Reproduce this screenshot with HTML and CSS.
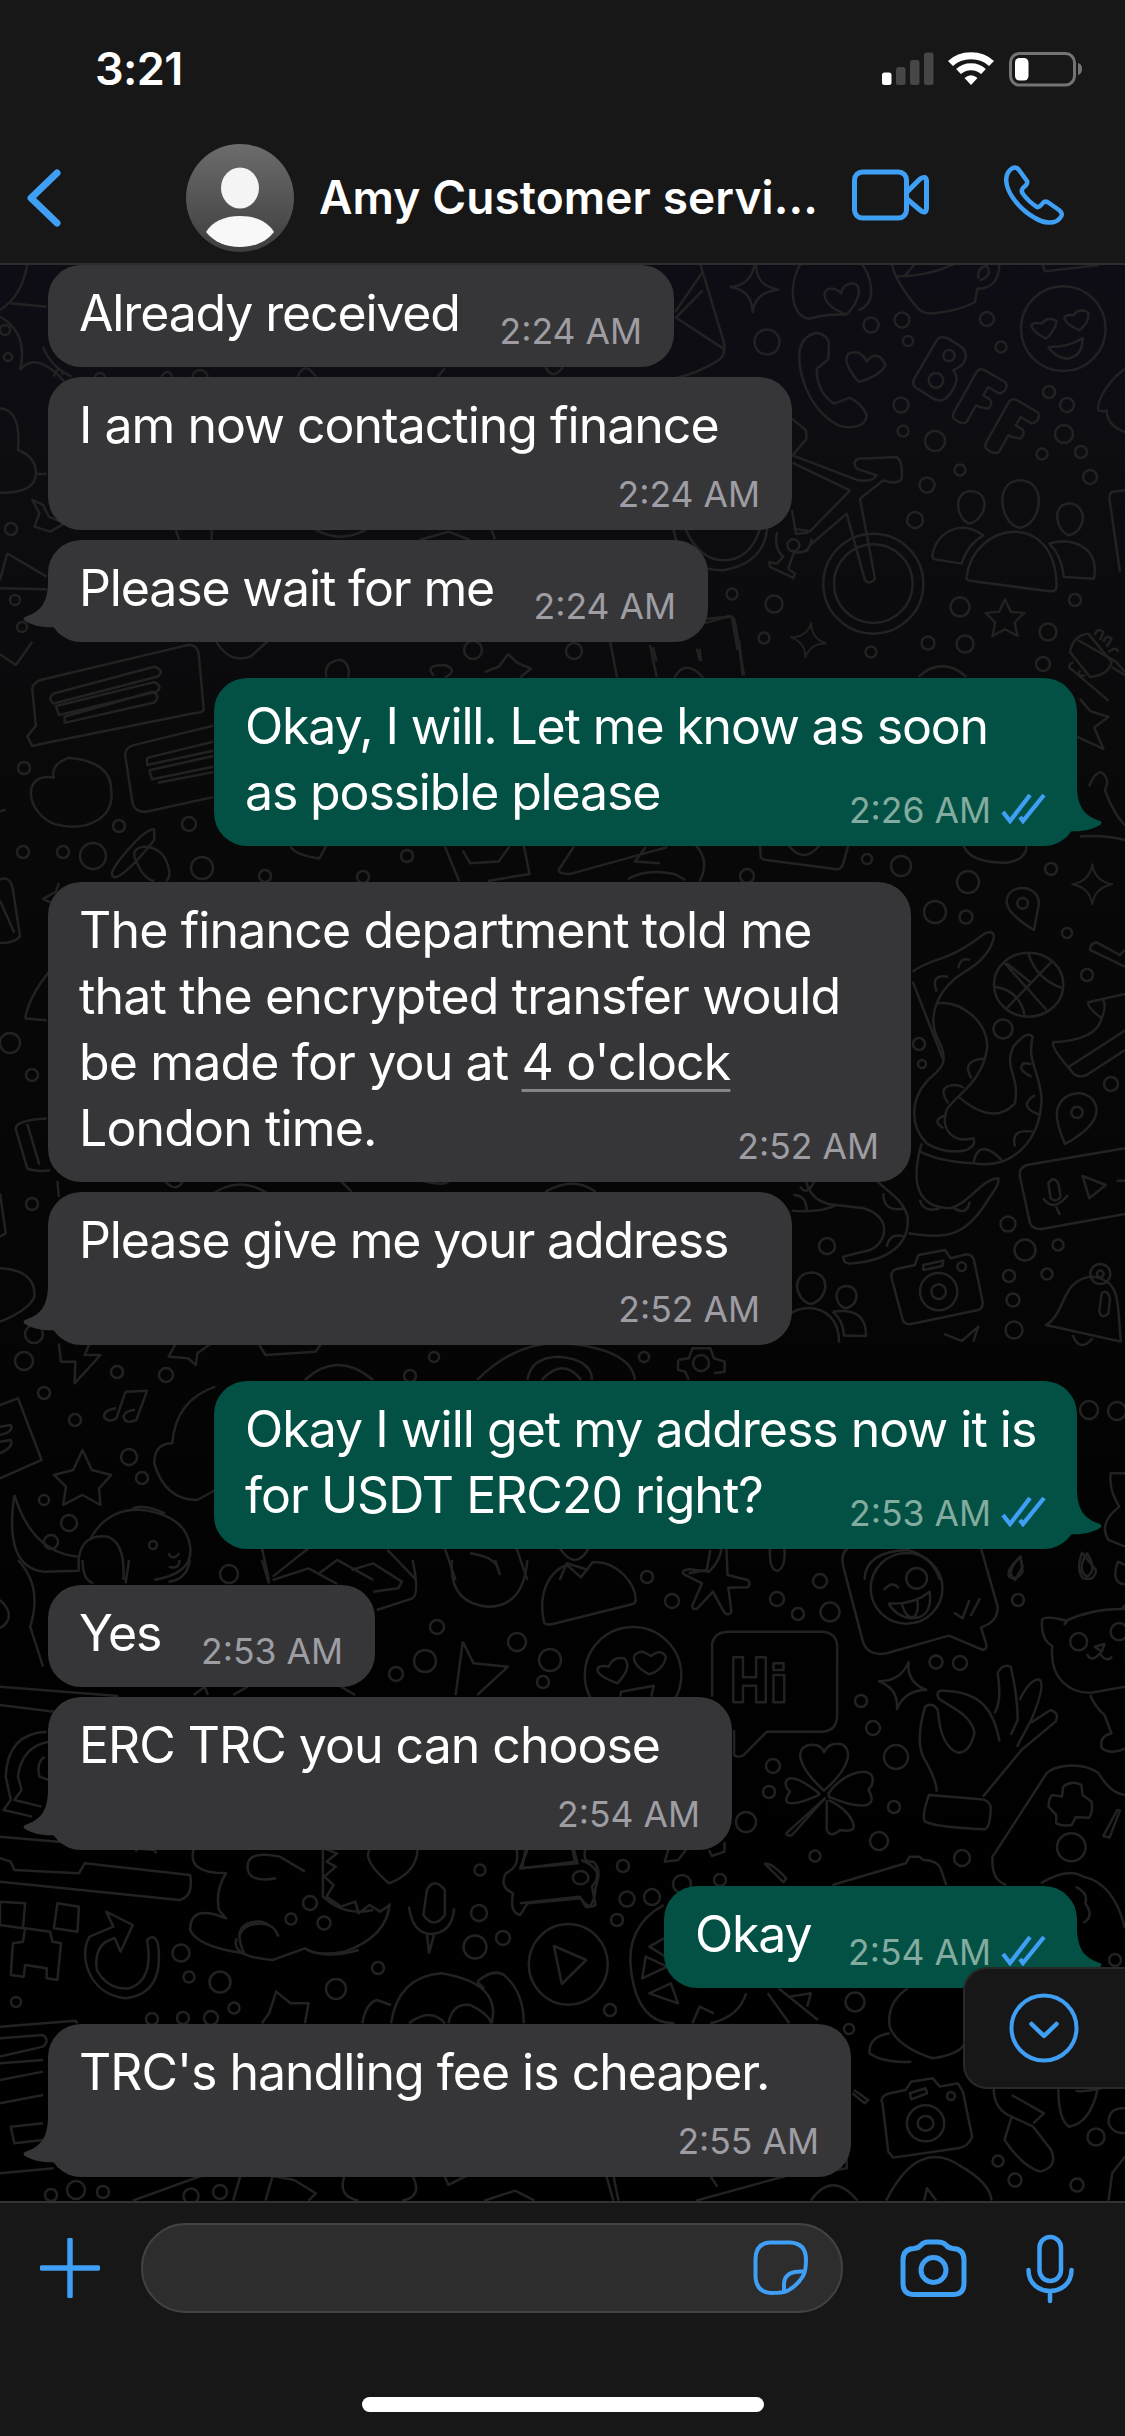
FILE: index.html
```html
<!DOCTYPE html>
<html lang="en">
<head>
<meta charset="utf-8">
<title>Amy Customer service</title>
<link rel="stylesheet" href="styles.css">
</head>
<body>
<svg class="defs" width="0" height="0" aria-hidden="true">
  <defs>
    <symbol id="ticks" viewBox="0 0 46 31"><path d="M2 19 L9 28 L29 2 M19 24 L22 28 L43 2" fill="none" stroke="#3f9ff5" stroke-width="4.300"/></symbol>
    <symbol id="tail" viewBox="0 0 36 60"><path d="M25 0 C25 24 16 31 2 36 Q-1 38 2 40 C11 45 20 47 34 46 L36 0Z"/></symbol>
    <path id="spark" d="M0 -24 Q3 -4 24 0 Q3 4 0 24 Q-3 4 -24 0 Q-3 -4 0 -24Z"/>
    <path id="star" d="M0 -20 L6 -7 L20 -6 L10 4 L13 18 L0 11 L-13 18 L-10 4 L-20 -6 L-6 -7Z"/>
  </defs>
</svg>
<div class="phone">
  <header class="header">
    <div class="status">
      <span class="clock">3:21</span>
      <svg class="status-icons" viewBox="0 0 202 36" width="202" height="36">
        <rect x="0" y="21.500" width="9.500" height="12.500" rx="2.500" fill="#fff"/>
        <g fill="#464646"><rect x="14" y="16" width="9.500" height="18" rx="2.500"/><rect x="28" y="9" width="9.500" height="25" rx="2.500"/><rect x="42" y="1.500" width="9.500" height="32.500" rx="2.500"/></g>
        <g fill="none" stroke="#fff" stroke-width="7"><path d="M68.500 12.500 C79 2 99 2 109.500 12.500"/><path d="M76.500 20.500 C83.500 14 94.500 14 101.500 20.500"/></g>
        <path d="M82.500 27 Q89 21.500 95.500 27 L89 34Z" fill="#fff"/>
        <rect x="128.500" y="2.500" width="64" height="31.500" rx="9" fill="none" stroke="#747474" stroke-width="3"/>
        <rect x="133" y="7" width="13.500" height="22.500" rx="4.500" fill="#fff"/>
        <path d="M196 12 Q200 13 200 18 Q200 23 196 24Z" fill="#747474"/>
      </svg>
    </div>
    <div class="nav">
      <svg class="back" viewBox="0 0 36 60" width="36" height="60"><path d="M31 5 L5 30 L31 55" fill="none" stroke="#3f9ff5" stroke-width="7" stroke-linecap="round" stroke-linejoin="round"/></svg>
      <svg class="avatar" viewBox="0 0 108 108" width="108" height="108">
        <defs><linearGradient id="av" x1="0" y1="0" x2="0" y2="1"><stop offset="0" stop-color="#6c6c6c"/><stop offset="1" stop-color="#3e3e3e"/></linearGradient></defs>
        <circle cx="54" cy="54" r="54" fill="url(#av)"/>
        <ellipse cx="54" cy="44" rx="19" ry="20.500" fill="#f4f4f4"/>
        <path d="M20 88 C26 78 38 72 54 72 S82 78 88 88 C80 98 68 103 54 103 S28 98 20 88Z" fill="#f8f8f8"/>
      </svg>
      <span class="name">Amy Customer servi...</span>
      <svg class="video" viewBox="0 0 78 52" width="78" height="52" fill="none" stroke="#3f9ff5" stroke-width="5" stroke-linejoin="round"><rect x="3.500" y="3" width="52" height="46" rx="8"/><path d="M56 23 L69 10 Q75 6 75.500 12 V39 Q75 46 69 41 L56 30"/></svg>
      <svg class="call" viewBox="0 0 60 60" width="60" height="60" fill="none" stroke="#3f9ff5" stroke-width="4.500" stroke-linejoin="round"><path d="M6 5 Q11 0 15 5 L23 16 Q24 19 20 22 Q16 25 19 29 Q25 37 33 42 Q35 43 38 39 Q41 35 45 38 L55 45 Q60 49 56 53 C51 60 39 58 31 53 Q18 46 9 33 C0 20 1 10 6 5Z"/></svg>
    </div>
  </header>

  <main class="chat">
    <svg class="wallpaper" viewBox="0 265 1125 1936" width="1125" height="1936" aria-hidden="true">
      <g transform="matrix(.3333 0 0 .3333 640 262)">
        <path d="M180 0 L188 30 L250 235 Q262 280 230 298 Q170 335 100 350 M188 30 L105 150 M105 165 L250 260 M188 85 L110 165"/>
        <path d="M348 0 Q345 72 415 83 Q345 90 338 150 Q335 85 272 75 Q335 70 345 0"/>
        <path d="M485 0 C440 70 455 170 510 170 Q560 155 620 158 M655 145 C720 120 690 30 660 0 M620 157 C540 130 540 75 580 80 Q598 85 603 95 Q610 60 645 65 C670 80 650 130 620 157Z"/>
        <path d="M755 0 Q760 50 830 135 Q850 160 890 153 Q960 145 1005 120 L1012 80 Q1080 80 1078 0 M765 43 Q860 45 945 5 M795 40 L830 0 M1015 50 Q1012 15 1040 12 Q1060 40 1020 55 M1205 0 L1215 28 L1375 10"/>
        <circle cx="1270" cy="200" r="127"/><path d="M1218 230 C1160 200 1165 175 1205 185 Q1225 160 1250 178 C1245 205 1230 220 1218 230Z M1318 205 C1265 180 1260 155 1300 160 Q1320 135 1345 152 C1348 180 1330 195 1318 205Z M1225 255 Q1290 255 1328 228 Q1328 285 1280 290 Q1245 285 1225 255Z"/>
        <path d="M530 212 Q565 220 567 245 L565 292 L530 320 Q530 390 582 425 L630 407 Q670 430 680 460 C680 490 640 505 595 490 C500 440 470 320 480 260 Q490 220 530 212Z"/>
        <path d="M656 360 Q605 300 625 275 Q660 260 680 298 Q715 260 737 310 Q715 345 656 360Z"/>
        <path d="M890 235 Q900 220 925 230 L965 255 Q990 280 965 310 L940 325 Q960 350 940 380 Q915 430 880 410 L825 375 Q815 365 823 350Z"/><circle cx="927" cy="281" r="17"/><circle cx="888" cy="355" r="22"/>
        <path id="f" d="M1010 330 Q1020 315 1040 328 L1095 360 Q1105 370 1095 385 Q1080 400 1070 390 L1045 375 L1030 400 L1050 412 Q1060 425 1045 440 L1020 435 L1008 430 L980 480 Q965 490 942 470 Q935 460 945 445Z"/>
        <use href="#f" x="97" y="90"/>
        <path d="M456 470 L498 505 L500 530 L458 580 L655 655 Q700 660 710 640 L650 620 Q635 600 655 590 L770 585 Q790 600 785 650 Q770 670 730 655 L660 710 L705 950 Q690 970 675 955 L620 755 L510 850 L500 870 M458 603 L630 685 L510 808 L460 800 M456 745 L468 815 L505 812"/>
        <circle cx="700" cy="965" r="150"/><circle cx="700" cy="965" r="118"/>
        <path d="M100 800 Q120 925 250 925 Q370 905 382 800 M135 800 Q180 895 250 895 Q330 895 360 800 M412 810 Q400 860 430 885 L410 905 L388 900 L390 915 L460 948 L465 935 L445 920 L462 870 Q510 880 515 830"/><circle cx="460" cy="850" r="18"/>
        <path d="M1140 655 C1060 655 1080 790 1140 797 C1205 790 1225 655 1140 655Z M992 687 C935 690 950 775 990 785 C1040 770 1055 690 992 687Z M1288 724 C1230 728 1250 810 1288 820 C1340 805 1345 730 1288 724Z M1030 820 C960 770 890 810 877 880 Q877 892 890 893 L965 905 Q980 850 1030 820Z M980 945 C1000 780 1245 740 1250 970 Q1250 990 1230 988 L1000 958 Q975 955 980 945Z M1228 845 C1290 825 1380 850 1362 950 L1272 945 Q1265 880 1228 845Z"/>
        <use href="#star" transform="translate(1095 1070) scale(2.900)"/><use href="#spark" transform="translate(505 1135) rotate(10) scale(2.200)"/>
        <path d="M1290 1170 Q1300 1120 1345 1115 L1415 1200 Q1405 1240 1350 1245Z M1365 1120 Q1370 1095 1390 1110 L1380 1135 M1390 1140 Q1400 1115 1415 1130 L1400 1155 M1405 1170 Q1430 1150 1435 1170 M1300 1200 Q1275 1215 1300 1225 M1320 1225 Q1310 1245 1335 1240 M1415 1215 L1455 1240 M1455 685 L1415 690 Q1405 700 1410 720 L1440 930 M1455 320 C1400 360 1370 420 1375 445 Q1390 450 1400 445 Q1400 490 1455 510"/>
        <path d="M190 1085 L265 1063 Q280 1060 285 1080 L312 1240 M30 1150 L50 1245 M170 1160 L180 1195 M835 1245 Q905 1180 980 1245"/>
      </g>
      <g transform="matrix(.3333 0 0 .3333 740 840)">
        <path d="M60 15 L62 50 Q65 60 80 60 L290 88 Q305 88 310 70 L325 15 M145 15 Q190 75 240 15 M670 15 Q690 70 800 68 Q860 60 860 15"/>
        <use href="#spark" transform="translate(1057 133) scale(2.500)"/>
        <path d="M882 270 Q800 220 800 185 C800 130 895 130 897 190Z"/><circle cx="848" cy="190" r="16"/>
        <path d="M975 912 Q940 830 955 800 C980 740 1065 750 1070 810 Q1070 860 975 912Z"/><circle cx="1011" cy="817" r="17"/>
        <ellipse cx="866" cy="434" rx="104" ry="96"/><path d="M790 365 L920 510 M800 505 L935 365 M865 340 Q890 420 970 445 M765 440 Q840 450 855 530 M800 370 L875 430"/>
        <path d="M518 395 C580 350 620 370 735 280 Q760 270 762 290 Q750 350 675 395 C600 440 560 520 590 590 C640 680 590 690 560 725 C510 780 510 860 560 910 Q620 945 680 930 Q710 915 700 895 C640 910 600 870 620 810 C640 770 730 730 742 620 C740 540 660 480 590 490 M518 425 L610 660 M655 770 Q760 860 825 790 C840 700 790 690 820 620 Q860 570 878 590 C860 670 900 690 905 780 C900 900 820 990 700 970 Q600 965 540 935"/>
        <path d="M655 385 Q660 350 690 360 M590 455 Q570 400 625 410 M695 715 Q660 660 738 655 M625 790 Q590 740 640 735 Q665 735 670 745 M610 865 Q570 840 620 825 M875 710 Q830 690 850 670 L875 672 M900 825 Q830 800 885 765 M825 920 Q810 865 880 875 M700 970 Q715 890 785 960"/>
        <path d="M545 910 Q490 1100 630 1105 C690 1090 720 1020 775 1015 Q780 1030 750 1070 C680 1190 620 1200 505 1180 M192 955 Q185 1090 290 1095 L370 1105 C460 1130 440 1210 390 1230 L310 1250 Q310 1275 340 1270 C450 1260 510 1210 503 1130 C480 1050 400 1050 370 955 M540 1080 Q550 1120 600 1105 M640 1103 Q680 1130 690 1085 M430 1060 Q430 1120 495 1105 M340 960 Q345 1020 385 1018 M135 1018 L195 1010 M155 1112 Q240 1120 290 1095 M160 1065 Q200 1065 200 1112 M440 1220 Q450 1175 495 1190"/>
        <path d="M455 1315 Q450 1295 470 1287 L525 1275 L535 1245 L615 1230 L632 1255 L680 1243 Q700 1245 703 1265 L728 1385 Q730 1405 715 1410 L510 1453 Q490 1453 487 1435Z M550 1275 L610 1262 L607 1278 L550 1290Z M540 1355 a56 56 0 1 0 112 0 a56 56 0 1 0 -112 0 M574 1355 a22 22 0 1 0 44 0 a22 22 0 1 0 -44 0 M652 1280 a13 13 0 1 0 26 0 a13 13 0 1 0 -26 0"/>
        <path d="M918 1455 C980 1420 960 1320 1055 1310 C1150 1320 1130 1400 1143 1505Z M998 1485 Q1020 1540 1058 1495 M1085 1360 Q1105 1345 1110 1380 L1105 1420 Q1085 1440 1078 1415Z"/><circle cx="1081" cy="1302" r="30"/><circle cx="1081" cy="1302" r="10"/>
        <path d="M1155 925 L860 975 Q835 985 840 1010 L870 1150 Q880 1170 905 1167 L1155 1122 M925 1030 Q940 1005 955 1030 L962 1070 Q950 1090 932 1075Z M910 1075 Q940 1120 984 1065 M948 1100 L960 1125 M1028 1008 L1097 1035 L1048 1075Z M1130 1022 H1155"/>
        <path d="M1155 380 L1050 330 Q1050 310 1070 307 L1140 345 L1155 330 M1155 462 L1045 487 Q1040 500 1085 535 Q1070 600 940 607 Q930 620 1000 700 Q1015 715 1040 705 L1155 630 M985 682 L1155 572 M1085 535 Q1100 500 1090 480"/>
        <path d="M215 1298 C150 1300 165 1380 212 1392 C265 1380 275 1300 215 1298Z M320 1338 C275 1340 285 1400 318 1405 C360 1395 360 1340 320 1338Z M105 1503 C120 1370 300 1370 297 1508 M28 1465 Q40 1405 90 1402 L135 1408 Q95 1430 90 1470 M278 1415 Q380 1400 378 1488 L312 1487 Q310 1440 278 1415 M612 1482 L665 1503 L715 1460 L700 1505"/>
      </g>
      <g transform="matrix(.3858 0 0 .3333 520 1540)">
        <path d="M62 245 C40 120 110 70 125 78 L158 112 L188 67 C250 60 300 130 300 180 Q300 190 290 193 L85 252 Q65 257 62 245Z M100 20 Q145 100 180 20"/>
        <path d="M535 25 L538 105 L590 120 Q600 130 590 142 L540 143 L548 215 Q540 232 528 215 L500 155 L460 205 Q445 212 447 195 L472 130 L425 103 Q415 90 440 88 L490 95 Q520 60 522 25 M648 25 Q645 90 668 93 Q690 80 685 25"/>
        <path d="M850 25 Q830 40 838 80 L890 310 Q905 350 950 340 L1112 287 L1200 330 Q1215 325 1205 300 L1195 262 Q1240 245 1238 200 L1195 25"/><ellipse cx="1002" cy="145" rx="93" ry="106"/><ellipse cx="1028" cy="115" rx="27" ry="31"/>
        <path d="M943 150 Q965 120 982 145 M955 190 Q1020 195 1062 155 Q1070 235 1015 235 Q975 230 955 190 M990 192 Q1000 235 1020 232 Q1035 220 1030 175 M1125 218 L1147 235 L1165 180 M1168 228 L1192 175"/>
        <ellipse cx="293" cy="405" rx="125" ry="144"/><path d="M252 430 C180 400 195 370 230 380 Q240 350 270 355 C290 375 270 410 252 430Z M335 403 C280 370 290 335 318 335 L340 348 Q365 325 378 350 C375 380 350 400 335 403Z M260 470 L262 455 L347 437 L340 470"/>
        <path d="M498 470 V310 Q505 275 540 275 H785 Q820 280 822 315 V530 Q820 572 785 575 H640 L580 645 Q565 655 555 645 V570 M553 352 H578 V412 H612 V352 H637 V487 H612 V437 H578 V487 H553Z M657 370 H683 V390 H657Z M657 405 H685 V487 H657Z"/>
        <use href="#spark" transform="translate(992 437) rotate(12) scale(2.600 3)"/>
        <path d="M788 752 C720 680 710 625 750 615 Q780 610 788 637 Q800 605 835 613 C870 640 840 700 788 752Z M775 760 C700 690 680 715 692 745 L700 755 C670 800 710 800 775 765Z M800 760 C840 690 930 670 912 735 L903 750 C930 800 890 815 800 770Z M790 775 L690 880 Q690 890 705 885Z M795 780 V870 Q805 895 830 870 Q875 880 862 845 Q850 810 800 780"/>
        <path d="M1080 755 Q1080 720 1045 650 Q1025 600 1050 500 Q1070 485 1083 510 Q1090 620 1135 638 Q1165 640 1178 580 C1170 520 1110 500 1085 475 Q1075 450 1100 452 C1200 455 1230 520 1243 605 M1230 520 Q1250 480 1238 400 Q1250 370 1272 380 Q1290 470 1290 540 L1272 585 M1295 480 Q1320 420 1345 418 Q1365 430 1325 540 L1288 620 M1325 548 L1375 510 Q1400 520 1388 545 L1300 630 L1200 770 M1060 765 Q1040 830 1050 845 Q1080 862 1205 868 Q1220 860 1220 800 Q1215 780 1195 778Z"/>
        <path d="M1410 255 L1418 243 Q1360 225 1353 240 Q1350 300 1380 318 C1370 420 1430 460 1480 458 L1568 440 M1410 245 Q1480 205 1568 207 M1568 195 L1560 207 M1478 465 Q1490 500 1515 525 L1533 580 Q1500 590 1508 625 Q1530 645 1568 625 M1470 342 Q1480 370 1503 340 Q1520 370 1535 350 M1490 320 L1515 312 L1508 335Z"/><ellipse cx="1448" cy="305" rx="22" ry="26"/><ellipse cx="1553" cy="275" rx="22" ry="26"/>
        <path d="M1568 765 Q1530 760 1500 700 C1450 660 1380 680 1365 700 L1225 950 Q1220 1020 1260 1035 M1350 1030 Q1420 980 1460 1010 Q1540 1030 1568 1165 M1408 740 Q1430 720 1455 735 L1458 765 L1482 785 Q1485 820 1475 833 L1440 832 L1430 855 Q1405 860 1390 850 V825 L1370 800 Q1370 775 1380 765 L1405 770Z M1548 810 L1555 812 L1528 893 L1512 888Z M1440 1040 Q1475 1060 1465 1090 Q1490 1130 1460 1148"/><ellipse cx="1429" cy="922" rx="37" ry="42"/>
        <path d="M1297 50 Q1255 95 1270 112 Q1290 120 1303 95Z M1457 38 Q1440 90 1460 115 Q1490 125 1493 90Z M1568 75 L1550 65 Q1530 130 1568 133 M810 1035 L1000 970 L1010 950 L1035 950 L1045 960 Q1080 960 1090 985 L1105 1035 M635 972 Q650 965 690 1015 L683 1027Z"/>
        <path d="M15 925 L5 985 L143 965 L135 925 M170 925 Q160 970 190 965 C220 1000 190 1040 195 1060 Q185 1110 170 1100 L155 1070 L0 1090 M385 927 L375 965 L410 960 L430 930 M490 930 L497 948 L530 935 V905"/><circle cx="157" cy="1013" r="20"/>
      </g>
      <g transform="matrix(.7175 0 0 .3333 0 250)">
        <path d="M38 45 Q30 140 0 180 M15 160 L65 170 M0 200 Q40 250 28 360 M28 360 Q50 300 90 395 M60 290 Q70 350 100 380 M0 475 Q30 480 25 600 Q50 620 50 670 Q50 730 0 728 M50 672 H65 M45 750 L60 765 L68 800 L90 820 L70 845 L48 830 L55 790Z M0 1015 L65 1018 M10 910 L65 980 M10 910 L0 990 M75 380 Q82 340 88 375 M225 380 Q235 350 240 380 M415 380 Q425 330 440 380 M610 380 L620 355 M760 350 Q770 395 785 350 M245 840 L250 870 M295 840 V870 M440 840 Q475 880 510 840 M585 870 L625 845 L655 870 M685 840 L690 868 M960 1110 L1020 1100 L1028 1200"/>
      </g>
      <g transform="matrix(.7175 0 0 .3571 0 640)">
        <path d="M45 140 Q45 115 65 108 L260 15 Q275 10 277 40 L284 195 Q282 205 270 205 L60 290 L45 297 L38 270 L50 240Z M75 150 L215 75 Q230 85 220 102 L75 178 Q65 165 75 150Z M78 185 L215 118 Q228 130 218 145 L82 210Z M90 215 L212 145 Q225 155 215 175 L90 232Z"/>
        <path d="M297 240 L185 295 Q172 305 175 330 L185 460 Q190 485 205 480 L297 440 M205 330 L297 285 M205 330 V350 L297 310 M208 365 L297 325 M208 365 L212 390 L297 355 M220 400 L297 370"/>
        <path d="M75 385 C30 370 35 480 75 515 C120 540 160 500 155 420 Q155 340 95 330 Q70 350 75 385Z M0 40 L22 70 L45 5 M300 0 Q320 70 350 45 L375 0 M455 105 Q450 60 475 55 Q490 70 485 105 M605 100 Q590 70 620 70 Q640 85 620 105 M675 90 L695 75 L708 40 L722 65 L740 80 L725 105 M850 0 L860 105 M910 20 L915 60 M975 25 L977 60 M1030 0 L1035 100 M940 105 Q955 50 980 105"/>
        <path d="M215 530 Q200 530 165 620 Q150 660 160 665 Q175 660 215 560Z M190 620 C175 570 220 560 232 620 Q240 660 232 675 M190 620 Q200 670 215 675 M0 480 L8 475 M405 578 Q410 600 445 612 L455 575 M620 578 L640 675 M730 575 L738 655 L680 675 M645 590 L655 625 L695 620 L710 578 M800 578 L780 640 Q775 655 795 655 L930 580 M900 580 L885 620 L920 625 M970 575 Q990 620 975 675 M875 670 Q900 640 940 655 L955 672"/>
        <path d="M0 670 Q15 660 18 700 L28 830 Q20 850 0 848 M0 730 L20 820 M82 680 L78 705 L60 725 L70 735 M35 1060 L65 1065 M68 930 Q40 1000 35 1060 M65 1340 Q20 1345 22 1370 L38 1480 Q50 1490 70 1485 M38 1355 L55 1470 M80 1515 L82 1560 M230 1515 Q245 1550 255 1515 M290 1560 Q335 1490 380 1560 M475 1515 L490 1545 M590 1515 Q620 1530 625 1515 M760 1545 Q800 1500 830 1545 M1115 1530 Q1125 1560 1135 1515"/>
        <path d="M1495 85 Q1510 110 1545 170 M1505 165 L1520 200 L1545 215 L1525 245 L1538 305 L1500 270 M1502 0 L1555 60 L1568 90 M1505 550 Q1540 545 1568 560 M1518 410 Q1525 370 1535 370 Q1548 390 1540 420 Q1550 480 1568 520"/>
      </g>
      <g transform="matrix(.7175 0 0 .3333 0 1180)">
        <path d="M0 40 L8 160 L0 170 M0 265 Q50 270 48 350 Q40 390 0 425 M82 490 L85 545 H105 L104 610 L140 525 H118 L125 490 M245 490 L235 530 L262 535 L273 555 L275 520 L295 490 M360 490 L370 525 L440 515 L448 490 M425 600 Q470 510 520 600 M665 600 Q720 480 790 490 Q880 510 885 600 M735 600 Q740 530 780 530 Q825 540 825 600 M755 600 Q785 530 810 600 M945 540 L960 535 L965 505 L990 505 L995 535 L1010 545 V575 L995 580 M945 540 V570 L955 575 L960 600 M300 620 Q245 660 240 790 Q215 790 215 850 Q230 960 275 960 L300 930 M175 635 L205 632 L190 720 Q175 735 172 710 Q175 690 188 690 M175 635 L162 715 Q150 730 145 710 Q145 690 162 685"/>
        <path d="M115 810 L128 870 L155 885 L138 925 L140 975 L115 945 L88 975 L92 920 L75 885 L102 870Z M0 675 L25 655 L58 840 L0 895 M0 740 L15 735 Q20 755 0 765 M0 785 L15 780 Q20 800 0 820 M20 945 Q5 1160 60 1175 L110 1172 M20 945 Q45 1120 110 1130 M110 1175 Q105 1060 150 1070 Q175 1090 172 1200 M125 1080 Q150 980 200 990 Q260 1010 265 1100 Q270 1180 215 1200 M185 985 Q200 970 230 1000 M235 1120 Q240 1145 250 1120 M235 1160 Q250 1170 250 1140"/>
        <path d="M365 1105 L375 1200 M380 1190 L430 1105 M445 1180 L470 1140 L520 1200 M540 1110 L580 1200 M620 1105 L635 1200 M655 1120 Q690 1130 695 1170 M720 1105 L735 1200 M780 1200 L790 1150 L820 1170 M990 1110 L985 1170 L960 1180 M1205 1200 Q1205 1115 1265 1110 Q1300 1130 1310 1200 M1422 1130 Q1400 1180 1415 1200 L1425 1160Z M1515 1120 Q1500 1170 1515 1190 Q1530 1170 1515 1120Z M1568 880 L1548 880 Q1545 930 1560 980 Q1530 1030 1545 1080 L1568 1100"/>
      </g>
      <g transform="matrix(.7175 0 0 .3333 0 1560)">
        <path d="M25 0 Q60 80 42 200 L60 320 M115 0 Q115 60 130 70 M180 0 L175 70 M265 0 Q260 60 235 65 M0 120 Q25 170 0 205 M365 0 L375 70 M380 60 L430 25 L470 72 M490 30 L520 10 L560 65 L555 85 L520 95 M525 150 L575 115 Q585 100 575 0 M630 0 Q625 130 680 140 Q730 140 735 0 M690 0 L697 45 M645 245 L635 405 M645 245 L660 310 L708 320 L665 405 M270 405 L285 380 L290 405 M325 405 L345 380 M475 380 L495 405 M0 380 L165 408 M0 435 L75 455"/>
        <path d="M65 515 Q10 520 8 650 L15 720 L5 750 L45 770 M68 545 Q30 560 25 650 L30 690 L20 720 L58 740 M62 590 Q50 610 55 650 L68 660 M80 820 L90 825 M0 830 L215 870 L218 880 M0 895 L15 905 L20 930 L110 940 L118 910 L265 945 Q270 1010 250 1020 L0 965 M190 875 V865"/>
        <path d="M270 868 Q260 940 315 940 Q300 990 305 1050 L315 1075 Q265 1030 265 1110 Q275 1160 340 1180 Q320 1080 365 1085 Q385 1100 388 1130 M425 935 L390 890 Q345 870 345 920 Q345 970 385 955 M455 868 L470 880 L455 905 L468 920 L452 950 L465 975 L455 1010 L475 1040 L495 1025 L500 1060 L515 1035 L530 1055 L543 1035 M450 870 V1010 Q480 1070 520 1050 M543 1030 Q540 1130 480 1175 Q440 1190 425 1165 M515 870 Q505 900 542 970 Q580 940 582 870 M735 870 L725 925 L805 910 L800 870 M720 870 Q725 920 705 940 Q695 980 715 1000 Q710 1060 725 1065 L735 1030 L810 1015 Q820 1050 830 1035 L825 980 Q845 930 810 900"/>
        <path d="M595 990 Q605 950 620 990 V1065 Q605 1110 590 1065Z M570 1040 Q575 1120 600 1122 Q630 1120 633 1045 M595 1125 L598 1178 L605 1125"/>
      </g>
      <g transform="matrix(.7175 0 0 .3333 0 1860)">
        <path d="M0 125 L35 130 L32 205 L0 195Z M80 130 L110 140 L108 215 L75 205Z M35 205 L70 215 L73 245 L85 250 L80 360 L65 355 V325 L35 315 L33 350 L15 345 L18 250 L32 245Z"/>
        <path d="M148 155 L185 195 L168 275 L160 235 Q130 250 135 330 Q150 390 180 385 Q215 360 205 240 Q215 220 220 250 Q230 400 175 415 C120 400 110 280 125 230 L158 200Z M330 235 Q320 290 380 300 L425 265 Q450 300 500 270 M333 230 Q340 180 375 195"/>
        <ellipse cx="792" cy="313" rx="55" ry="121"/><path d="M772 258 L817 300 L783 372Z M925 135 Q870 200 880 340 Q890 490 940 490 M895 355 L930 320 L900 290 Z M905 260 L935 300 L930 230Z M905 400 L935 370 L945 430Z M1040 400 Q1030 470 990 490 M965 490 L975 440 L995 460"/>
        <path d="M545 490 Q555 350 615 340 Q700 370 685 490 M570 490 Q600 440 620 490 M625 490 Q630 430 655 435 Q680 460 685 490 M665 365 Q690 320 705 350 Q730 400 730 490 M665 365 L675 385 M505 490 Q510 430 525 420 L545 435 M365 490 L375 460 L385 395 L405 430 L430 430 L425 490 M0 500 L105 482 L108 490 M0 535 L60 525 Q70 540 60 560 L0 590 M0 610 L60 600 M60 635 L0 660 M0 730 L60 705 M60 790 L15 800 L20 850 L60 840 M0 940 L75 925"/>
        <path d="M1085 385 L1140 480 M1070 400 L1100 490 M1100 410 L1130 400 L1125 440 M1265 385 Q1235 430 1240 500 Q1250 560 1300 595 Q1345 580 1345 540 M1240 520 Q1210 530 1212 580 Q1230 610 1270 605 M1190 690 L1210 720 L1205 730 L1188 700 M1230 730 Q1225 710 1240 700 L1262 690 L1270 665 L1300 655 L1310 680 L1335 670 L1342 695 L1355 830 Q1350 860 1335 865 L1245 893 L1238 875Z M1268 700 L1290 685 L1292 700 L1270 718Z"/><ellipse cx="1290" cy="790" rx="26" ry="54"/><ellipse cx="1290" cy="790" rx="11" ry="22"/>
        <path d="M1385 685 Q1385 750 1410 770 L1400 840 Q1425 920 1450 935 Q1475 920 1465 870 L1440 800 L1410 770 M1410 705 L1455 760 L1440 790 M1475 685 Q1475 780 1490 800 Q1520 790 1530 685 M1500 690 Q1500 700 1535 685 M1568 745 Q1545 740 1545 790 Q1550 820 1568 820"/>
        <path d="M185 1022 L280 948 M325 1022 L335 948 M370 1022 L380 948 L410 960 L440 1000 L430 1022 M480 948 Q470 1010 500 1022 M575 948 Q590 1010 560 1022 M620 950 L625 975 L650 948 M675 1022 L718 992 L745 1022 M845 948 L855 1022 M855 948 L862 1022 M970 1022 L1095 948 M990 948 L1000 980 M1130 1022 Q1160 930 1195 1022 M1235 1022 Q1280 830 1340 920 Q1380 970 1382 1022 M1288 1022 L1292 985 L1305 1022 M1545 1022 L1550 940 L1568 890 M1165 930 L1180 925 V895"/>
      </g>
      <g>
        <circle cx="767" cy="342" r="12.500"/><circle cx="871" cy="325" r="7.500"/><circle cx="902" cy="320" r="7.500"/><circle cx="908" cy="341" r="5"/><circle cx="987" cy="319" r="7"/><circle cx="1001" cy="347" r="5.500"/><circle cx="901" cy="405" r="7.500"/><circle cx="903" cy="431" r="5.500"/><circle cx="935" cy="441" r="10"/><circle cx="1049" cy="392" r="6"/><circle cx="1067" cy="405" r="7"/><circle cx="1064" cy="434" r="9"/><circle cx="1042" cy="454" r="5.500"/><circle cx="1081" cy="452" r="6"/><circle cx="960" cy="470" r="5.500"/><circle cx="927" cy="485" r="7.500"/><circle cx="915" cy="520" r="8"/><circle cx="1090" cy="477" r="7"/><circle cx="732" cy="594" r="5.500"/><circle cx="774" cy="604" r="8.500"/><circle cx="764" cy="638" r="5.500"/><circle cx="871" cy="652" r="5.500"/><circle cx="928" cy="643" r="6.500"/><circle cx="965" cy="644" r="8.500"/><circle cx="960" cy="607" r="9.500"/><circle cx="1075" cy="600" r="6"/><circle cx="1048" cy="632" r="8.500"/><circle cx="1043" cy="664" r="7"/>
        <circle cx="867" cy="859" r="5"/><circle cx="901" cy="866" r="10"/><circle cx="968" cy="882" r="11"/><circle cx="1051" cy="869" r="6"/><circle cx="935" cy="912" r="11"/><circle cx="966" cy="917" r="6.500"/><circle cx="1067" cy="933" r="5"/><circle cx="1087" cy="975" r="6"/><circle cx="1003" cy="1029" r="9.500"/><circle cx="919" cy="1044" r="6"/><circle cx="922" cy="1064" r="4"/><circle cx="1111" cy="1084" r="7"/><circle cx="1008" cy="1224" r="7.500"/><circle cx="1025" cy="1250" r="10.500"/><circle cx="1058" cy="1245" r="5.500"/><circle cx="827" cy="1246" r="8"/><circle cx="1009" cy="1276" r="6"/><circle cx="1047" cy="1274" r="5.500"/><circle cx="1013" cy="1300" r="6.500"/><circle cx="1014" cy="1330" r="8.500"/><circle cx="1089" cy="1410" r="9"/><circle cx="1117" cy="1411" r="9"/>
        <circle cx="647" cy="1577" r="6"/><circle cx="672" cy="1601" r="7"/><circle cx="777" cy="1599" r="7"/><circle cx="798" cy="1614" r="6"/><circle cx="820" cy="1581" r="7"/><circle cx="830" cy="1612" r="9.500"/><circle cx="1018" cy="1600" r="6"/><circle cx="437" cy="1627" r="7"/><circle cx="425" cy="1661" r="11"/><circle cx="396" cy="1674" r="7"/><circle cx="517" cy="1642" r="9"/><circle cx="550" cy="1660" r="11"/><circle cx="543" cy="1682" r="6"/><circle cx="936" cy="1662" r="6.500"/><circle cx="960" cy="1663" r="7"/><circle cx="861" cy="1701" r="6"/><circle cx="873" cy="1728" r="7"/><circle cx="896" cy="1757" r="12"/><circle cx="773" cy="1766" r="7"/><circle cx="769" cy="1792" r="6"/><circle cx="746" cy="1822" r="10"/><circle cx="894" cy="1807" r="6"/><circle cx="879" cy="1841" r="9"/><circle cx="815" cy="1856" r="5.500"/><circle cx="962" cy="1858" r="8"/><circle cx="720" cy="1880" r="6"/><circle cx="682" cy="1884" r="9"/><circle cx="623" cy="1866" r="6"/><circle cx="627" cy="1899" r="7.500"/><circle cx="652" cy="1897" r="8"/><circle cx="617" cy="1920" r="6"/><circle cx="480" cy="1870" r="5.500"/>
        <circle cx="310" cy="1903" r="7"/><circle cx="291" cy="1919" r="5.500"/><circle cx="324" cy="1923" r="6.500"/><circle cx="479" cy="1913" r="8"/><circle cx="503" cy="1938" r="7"/><circle cx="475" cy="1947" r="11.500"/><circle cx="181" cy="1953" r="8.500"/><circle cx="220" cy="1982" r="10.500"/><circle cx="189" cy="1977" r="5.500"/><circle cx="16" cy="2002" r="5"/><circle cx="336" cy="1989" r="10"/><circle cx="378" cy="1968" r="6"/><circle cx="234" cy="2008" r="5.500"/><circle cx="152" cy="2019" r="6"/><circle cx="183" cy="2018" r="6"/><circle cx="211" cy="2018" r="7"/><circle cx="610" cy="2010" r="6"/><circle cx="855" cy="2002" r="9.500"/><circle cx="849" cy="2029" r="5"/><circle cx="1096" cy="2137" r="8.500"/><circle cx="998" cy="2161" r="5.500"/><circle cx="1015" cy="2180" r="6.500"/><circle cx="1077" cy="2185" r="6.500"/><circle cx="51" cy="2195" r="6"/><circle cx="76" cy="2190" r="9"/><circle cx="103" cy="2192" r="6"/><circle cx="191" cy="2196" r="7.500"/><circle cx="220" cy="2192" r="7"/><circle cx="951" cy="2096" r="4"/><circle cx="1115" cy="1960" r="6"/>
        <circle cx="11" cy="529" r="6"/><circle cx="15" cy="600" r="5"/><circle cx="22" cy="627" r="5"/><circle cx="5" cy="330" r="5"/><circle cx="8" cy="357" r="4"/><circle cx="24" cy="768" r="6"/><circle cx="119" cy="826" r="6"/><circle cx="189" cy="824" r="7"/><circle cx="23" cy="852" r="6"/><circle cx="63" cy="852" r="6"/><circle cx="93" cy="856" r="13"/><circle cx="202" cy="868" r="11"/><circle cx="265" cy="876" r="6"/><circle cx="363" cy="877" r="6"/><circle cx="407" cy="856" r="6"/><circle cx="747" cy="876" r="7"/><circle cx="473" cy="650" r="9"/><circle cx="574" cy="651" r="8"/><circle cx="100" cy="378" r="5"/><circle cx="200" cy="378" r="8"/><circle cx="10" cy="1043" r="10"/><circle cx="32" cy="1075" r="6"/><circle cx="32" cy="1204" r="6"/><circle cx="24" cy="1361" r="9"/><circle cx="34" cy="1334" r="9"/><circle cx="117" cy="1372" r="6"/><circle cx="166" cy="1375" r="7"/><circle cx="44" cy="1393" r="6"/><circle cx="75" cy="1420" r="6"/><circle cx="129" cy="1457" r="8"/><circle cx="142" cy="1478" r="6"/><circle cx="44" cy="1500" r="5"/><circle cx="69" cy="1523" r="8"/><circle cx="51" cy="1542" r="7"/><circle cx="229" cy="1574" r="9"/><circle cx="153" cy="1545" r="4"/><circle cx="644" cy="1357" r="5"/><circle cx="701" cy="1363" r="8"/><circle cx="434" cy="1357" r="5"/><circle cx="410" cy="1376" r="6"/>
      </g>
    </svg>

    <div class="messages">
      <article class="bubble in tight w626"><p>Already received</p><time>2:24 AM</time></article>
      <article class="bubble in below w744"><p>I am now contacting finance</p><time>2:24 AM</time></article>
      <article class="bubble in tight w660"><svg class="tail"><use href="#tail"/></svg><p>Please wait for me</p><time>2:24 AM</time></article>

      <article class="bubble out turn tight w863"><svg class="tail"><use href="#tail"/></svg><p>Okay, I will. Let me know as soon<br>as possible please</p><time>2:26 AM<svg class="ticks"><use href="#ticks"/></svg></time></article>

      <article class="bubble in turn loose w863"><p>The finance department told me<br>that the encrypted transfer would<br>be made for you at <u>4 o'clock</u><br>London time.</p><time>2:52 AM</time></article>
      <article class="bubble in below tight w744"><svg class="tail"><use href="#tail"/></svg><p>Please give me your address</p><time>2:52 AM</time></article>

      <article class="bubble out turn w863"><svg class="tail"><use href="#tail"/></svg><p>Okay I will get my address now it is<br>for USDT ERC20 right?</p><time>2:53 AM<svg class="ticks"><use href="#ticks"/></svg></time></article>

      <article class="bubble in turn tight w327"><p>Yes</p><time>2:53 AM</time></article>
      <article class="bubble in below w684"><svg class="tail"><use href="#tail"/></svg><p>ERC TRC you can choose</p><time>2:54 AM</time></article>

      <article class="bubble out turn tight w413"><svg class="tail"><use href="#tail"/></svg><p>Okay</p><time>2:54 AM<svg class="ticks"><use href="#ticks"/></svg></time></article>

      <article class="bubble in turn below w803"><svg class="tail"><use href="#tail"/></svg><p>TRC's handling fee is cheaper.</p><time>2:55 AM</time></article>
    </div>

    <button class="to-bottom" aria-label="Scroll to latest"><svg viewBox="0 0 70 70" width="70" height="70" fill="none" stroke="#3f9ff5" stroke-width="4" stroke-linecap="round" stroke-linejoin="round"><circle cx="35" cy="35" r="32.500"/><path d="M22.500 31 L35 43 L47.500 31" stroke-width="4.500"/></svg></button>
  </main>

  <footer class="footer">
    <div class="composer">
      <svg class="plus" viewBox="0 0 60 60" width="60" height="60"><path d="M30 2 V58 M2 30 H58" stroke="#3f9ff5" stroke-width="5.500" stroke-linecap="round"/></svg>
      <div class="field"><svg viewBox="0 0 56 56" width="56" height="56" fill="none" stroke="#3f9ff5" stroke-width="4" stroke-linejoin="round"><path d="M17 2.500 H37 Q53 3 53 20 Q53 31 50 36 Q44 46 34 51 Q30 53 18 53 Q3 52 2.500 36 V19 Q3 3 17 2.500Z M51 31.500 Q42 31 37 33.500 Q31 37 31 44 V51"/></svg></div>
      <svg class="camera" viewBox="0 0 67 59" width="67" height="59" fill="none" stroke="#3f9ff5" stroke-width="5" stroke-linejoin="round"><path d="M3 21 Q3 10 14 9.500 Q19 9 21 6 Q24 3 28 3 H38 Q43 3 46 6 Q48 9 53 9.500 Q64 10 64 21 V44 Q64 55.500 53 55.500 H14 Q3 55.500 3 44Z"/><circle cx="33.500" cy="31" r="12.500"/></svg>
      <svg class="mic" viewBox="0 0 48 70" width="48" height="70" fill="none" stroke="#3f9ff5" stroke-width="4.500" stroke-linecap="round"><rect x="13.500" y="3" width="21.500" height="44" rx="10.700"/><path d="M2.500 36 C2.500 64 45.500 64 45.500 36 M24 57 V67"/></svg>
    </div>
    <div class="home"></div>
  </footer>
</div>
</body>
</html>
```
FILE: styles.css
```css
* { box-sizing: border-box; }
body { margin: 0; background: #171717; }
svg { display: block; flex: none; }
.defs { position: absolute; }
.phone {
  width: 1125px; height: 2436px; overflow: hidden;
  display: flex; flex-direction: column;
  font-family: Inter, "Liberation Sans", sans-serif; color: #fff;
}

/* header */
.header { height: 265px; background: #171717; border-bottom: 2px solid #2d2d2d; }
.status { height: 132px; padding: 51px 43px 0 95px; display: flex; justify-content: space-between; align-items: flex-start; }
.status-icons { margin-right: -2px; }
.clock { font-size: 45px; line-height: 36px; font-weight: 600; letter-spacing: -.6px; }
.nav { height: 131px; display: flex; align-items: center; padding-left: 26px; }
.back { margin-right: 124px; }
.avatar { margin-right: 25px; }
.name { width: 530px; font-size: 46px; font-weight: 600; line-height: 58px; padding-bottom: 2px; letter-spacing: .1px; white-space: nowrap; }
.video { margin: 0 75px 6px 2px; }
.call { margin-bottom: 6px; }

/* conversation */
.chat { position: relative; height: 1936px; overflow: hidden; background: linear-gradient(#0e0d15 0, #0c0c0f 15%, #080808 30%, #050505 55%, #010101 72%, #000 100%); }
.wallpaper { position: absolute; left: 0; top: 0; fill: none; stroke: #222223; stroke-width: 2.5px; stroke-linejoin: round; }
.wallpaper * { vector-effect: non-scaling-stroke; }
.messages { position: relative; display: flex; flex-direction: column; gap: 10px; padding: 0 48px; }

.bubble { position: relative; display: grid; padding: 15px 32px 21px 31px; border-radius: 33px; }
.bubble > p, .bubble > time { grid-area: 1 / 1; }
.bubble p { margin: 0; font-size: 50px; line-height: 66px; letter-spacing: -1px; white-space: nowrap; }
.tight p { letter-spacing: -1.15px; }
.loose p { letter-spacing: -.85px; }
.bubble time { align-self: end; justify-self: end; margin-bottom: -4px; display: flex; align-items: center; gap: 10px; font-size: 35.500px; line-height: 36px; color: #9d9da3; }
.bubble.below p { padding-bottom: 51px; }
.turn { margin-top: 26px; }
.in { align-self: flex-start; background: #363638; fill: #363638; }
.out { align-self: flex-end; padding-right: 30px; background: #025144; fill: #025144; }
.out time { color: #83ab9f; }
.bubble u { text-decoration-color: #858587; text-decoration-thickness: 3px; text-underline-offset: 9px; }
.tail { position: absolute; width: 36px; height: 60px; bottom: 1px; left: -25px; }
.out .tail { left: auto; right: -25px; transform: scaleX(-1); }
.ticks { width: 46px; height: 31px; margin-top: -6px; }
.w327 { width: 327px; } .w413 { width: 413px; } .w626 { width: 626px; } .w660 { width: 660px; }
.w684 { width: 684px; } .w744 { width: 744px; } .w803 { width: 803px; } .w863 { width: 863px; }

.to-bottom {
  position: absolute; right: -3px; top: 1702px; width: 165px; height: 122px; margin: 0; padding: 0 0 0 44px;
  background: #171717; border: 2px solid #292929; border-radius: 24px 0 0 24px;
}
.to-bottom svg { margin: 0 auto 0 0; }

/* composer */
.footer { height: 235px; background: #171717; border-top: 2px solid #333; display: flex; flex-direction: column; align-items: center; }
.composer { width: 100%; padding: 20px 0 0 40px; display: flex; align-items: center; }
.field { width: 702px; height: 90px; margin-left: 41px; padding-right: 32px; display: flex; align-items: center; justify-content: flex-end; background: #2d2d2e; border: 2px solid #424243; border-radius: 45px; }
.camera { margin-left: 57px; }
.mic { margin-left: 59px; margin-top: 2px; }
.home { width: 402px; height: 15px; margin-top: 84px; border-radius: 8px; background: #fff; }
```
